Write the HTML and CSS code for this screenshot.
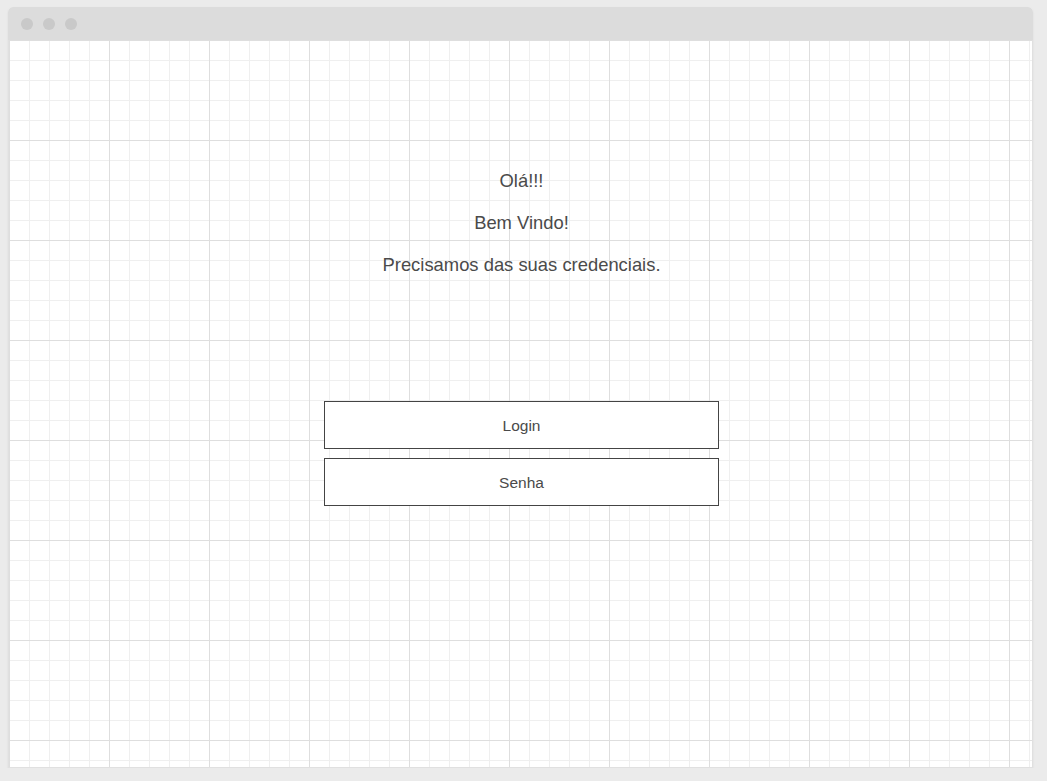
FILE: index.html
```html
<!DOCTYPE html>
<html lang="pt">
<head>
<meta charset="utf-8">
<title>Login</title>
<link rel="stylesheet" href="styles.css">
</head>
<body>
<div class="window">
  <div class="titlebar">
    <span class="dot"></span><span class="dot"></span><span class="dot"></span>
  </div>
  <div class="canvas">
    <div class="greeting">
      <p>Olá!!!</p>
      <p>Bem Vindo!</p>
      <p>Precisamos das suas credenciais.</p>
    </div>
    <form class="form">
      <input class="field" type="text" placeholder="Login">
      <input class="field" type="password" placeholder="Senha">
    </form>
  </div>
</div>
</body>
</html>
```
FILE: styles.css
```css
html, body {
  margin: 0;
  padding: 0;
  background: #ebebeb;
  font-family: "Liberation Sans", Arial, sans-serif;
}
.window {
  margin: 7px 0 0 8px;
  width: 1025px;
  height: 761px;
  background: #fff;
  border-radius: 5px 5px 0 0;
  box-shadow: 0 1px 2px rgba(0,0,0,0.08);
  display: flex;
  flex-direction: column;
  overflow: hidden;
}
.titlebar {
  height: 33px;
  background: #dcdcdc;
  display: flex;
  align-items: center;
  gap: 10px;
  padding-left: 13px;
  flex: none;
}
.dot {
  width: 12px;
  height: 12px;
  border-radius: 50%;
  background: #c9c9c9;
}
.canvas {
  flex: 1;
  border: 1px solid #e0e0e0;
  border-top: none;
  padding-left: 2px;
  background-color: #fff;
  background-image:
    linear-gradient(to right, #dedede 1px, transparent 1px),
    linear-gradient(to bottom, #dedede 1px, transparent 1px),
    linear-gradient(to right, #efefef 1px, transparent 1px),
    linear-gradient(to bottom, #efefef 1px, transparent 1px);
  background-size: 100px 100px, 100px 100px, 20px 20px, 20px 20px;
  display: flex;
  flex-direction: column;
  align-items: center;
}
.greeting {
  margin-top: 131px;
  text-align: center;
  color: #4a4a4a;
  font-size: 18.4px;
}
.greeting p {
  margin: 0 0 22px;
  line-height: 20px;
}
.form {
  margin-top: 104px;
  display: flex;
  flex-direction: column;
  gap: 9px;
}
.field {
  box-sizing: border-box;
  width: 395px;
  height: 48px;
  border: 1px solid #444;
  border-radius: 0;
  background: #fff;
  text-align: center;
  font-family: "Liberation Sans", Arial, sans-serif;
  font-size: 15.5px;
  color: #4a4a4a;
  outline: none;
  padding: 2px 0 0;
  margin: 0;
}
.field::placeholder {
  color: #4a4a4a;
  opacity: 1;
}
```
